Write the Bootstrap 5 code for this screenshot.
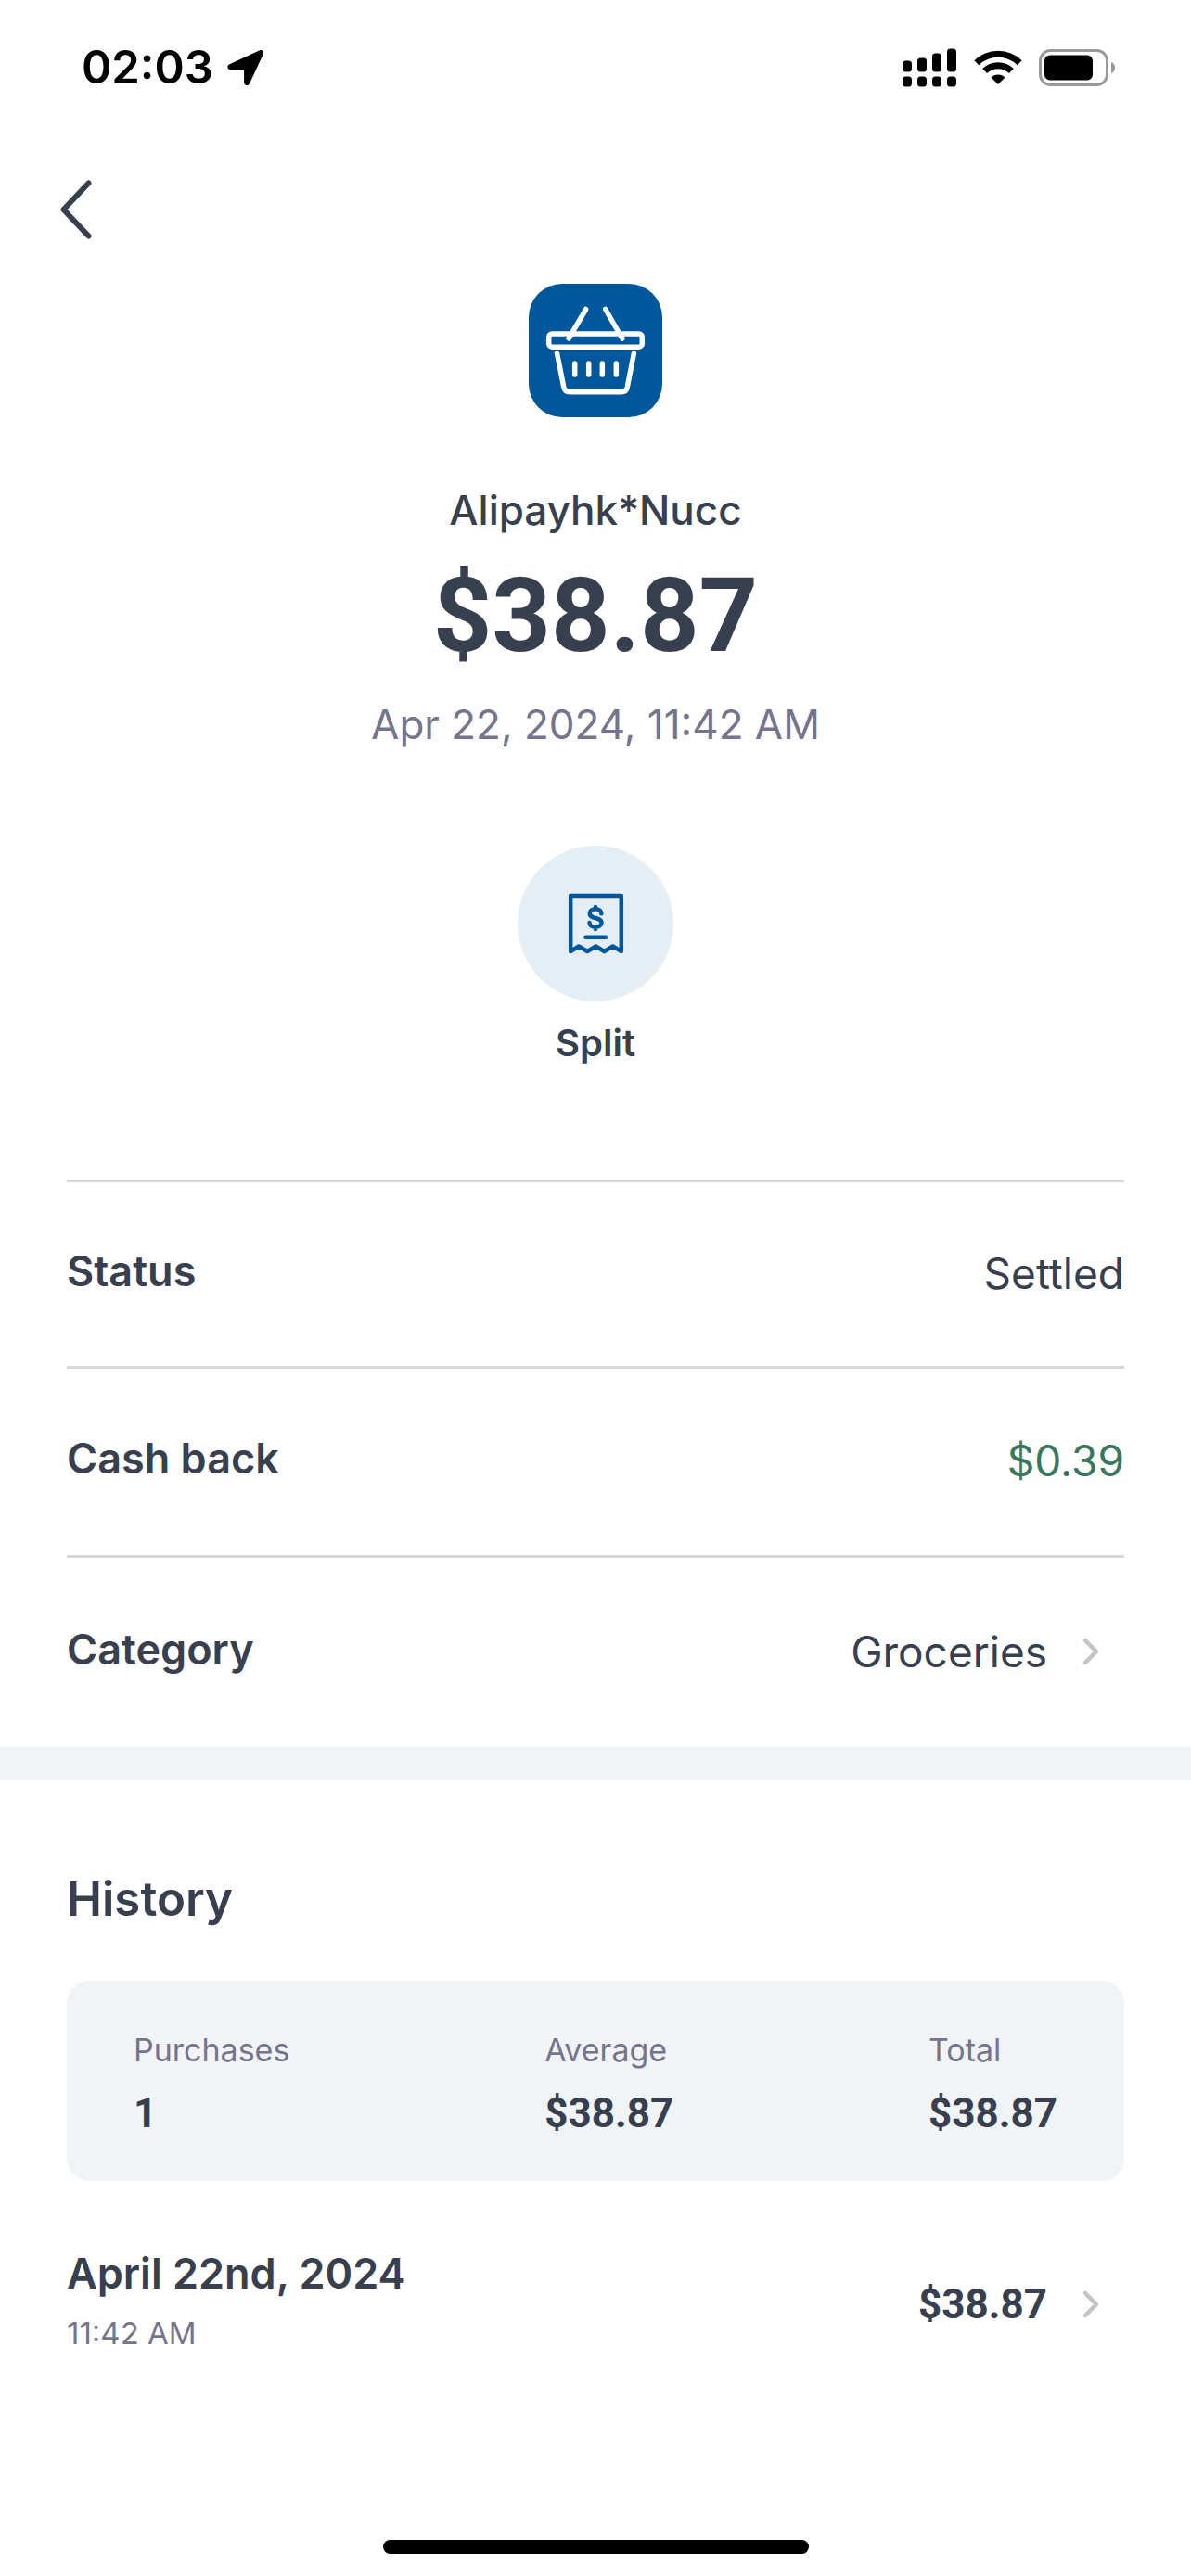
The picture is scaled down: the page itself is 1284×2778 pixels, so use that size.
<!DOCTYPE html>
<html lang="en">
<head>
<meta charset="utf-8">
<meta name="viewport" content="width=device-width, initial-scale=1">
<title>Transaction details</title>
<link href="https://cdn.jsdelivr.net/npm/bootstrap@5.3.0/dist/css/bootstrap.min.css" rel="stylesheet">
<style>
  :root {
    --ink: #383f4e;
    --muted-ink: #76748d;
    --brand: #01579b;
    --mist: #f0f4f7;
    --rule: #d8d8d8;
  }
  body {
    font-family: Inter, "Liberation Sans", sans-serif;
    color: var(--ink);
    background: #fff;
    font-size: 45px;
    line-height: 60px;
  }
  svg { display: block; flex: none; }
  .status-bar { padding: 43px 80px 0 88px; color: #000; }
  .clock { font-size: 49px; font-weight: 600; gap: 15px; }
  .signals { gap: 18px; }
  .back-btn { padding: 4px 6px; margin: 86px 0 0 55px; line-height: 0; color: var(--ink); }
  .summary { margin-top: 43px; }
  .tile { border-radius: 36px; background: var(--brand); }
  .merchant { font-size: 44px; font-weight: 500; line-height: 60px; margin: 70px 0 0; }
  .amount { font-family: Roboto, "Liberation Sans", sans-serif; font-weight: 700; }
  .amount-lg { font-size: 111px; line-height: 120px; margin-top: 24px; }
  .amount-sm { font-size: 44px; line-height: 60px; }
  .stamp { font-size: 44px; color: var(--muted-ink); margin-top: 27px; }
  .split-btn { margin-top: 101px; color: var(--ink); font-size: 40px; font-weight: 600; line-height: 50px; }
  .split-disc { width: 168px; height: 168px; background: #e5edf5; margin-bottom: 20px; }
  .facts { margin: 122px 72px 0; }
  .fact { border-top: 3px solid var(--rule); padding: 68px 0 70px; }
  .fact-cash { padding: 69px 0 72px; }
  .fact-link { padding: 71px 0 73px; }
  .fact dt { font-weight: 600; line-height: 56px; padding-bottom: 4px; }
  .fact dd { margin: 0; font-size: 46px; }
  .cash { color: #38775e; }
  .go { gap: 36px; padding-right: 26px; color: inherit; text-decoration: none; }
  .band { height: 36px; background: var(--mist); }
  .history { padding: 96px 72px 0; }
  .history-title { font-size: 51px; font-weight: 600; line-height: 64px; margin: 0 0 56px; }
  .totals { background: var(--mist); border-radius: 24px; padding: 51px 72px 43px; }
  .fine { font-size: 34px; line-height: 48px; color: var(--muted-ink); }
  .totals .amount-sm { margin-top: 14px; }
  .entry { margin-top: 70px; font-weight: 600; color: inherit; text-decoration: none; }
  .entry .fine { font-size: 33px; font-weight: 400; margin-top: 10px; }
  .entry .go { padding-top: 8px; }
  .home-bar { width: 459px; height: 15px; border-radius: 8px; background: #000; margin-bottom: 24px; }
</style>
<script src="https://cdn.jsdelivr.net/npm/bootstrap@5.3.0/dist/js/bootstrap.bundle.min.js"></script>
</head>
<body class="d-flex flex-column min-vh-100">

<header>
  <div class="status-bar d-flex justify-content-between align-items-center">
    <div class="clock d-flex align-items-center">
      <span>02:03</span>
      <svg width="40" height="40" viewBox="0 0 40 40" aria-hidden="true"><path d="M2.5 16.2 34.5 1.4c3-1.3 5.4 1 4.2 4L24 37.2c-1.400 2.900-5.900 2.300-5.900-1.200V22.200H3.600C-.1 22.200-.8 17.700 2.500 16.200z" fill="#000"/></svg>
    </div>
    <div class="signals d-flex align-items-center">
      <svg width="59" height="42" viewBox="0 0 59 42" aria-hidden="true">
        <rect x="0" y="13.500" width="10" height="12" rx="3.500"/><rect x="16" y="10.500" width="10" height="15" rx="3.500"/><rect x="32" y="5.500" width="10" height="20" rx="3.500"/><rect x="48" y="0.500" width="10" height="25" rx="3.500"/>
        <rect x="0" y="30.500" width="10" height="11" rx="3.500"/><rect x="16" y="30.500" width="10" height="11" rx="3.500"/><rect x="32" y="30.500" width="10" height="11" rx="3.500"/><rect x="48" y="30.500" width="10" height="11" rx="3.500"/>
      </svg>
      <svg width="52" height="38" viewBox="0 0 52 38" aria-hidden="true">
        <g fill="none" stroke="#000" stroke-width="7"><path d="M2.800 13.800a33 33 0 0 1 46.400 0"/><path d="M11.600 22.600a20.400 20.400 0 0 1 28.800 0"/></g>
        <path d="M18.500 29.500a10.600 10.600 0 0 1 15 0L26 37z"/>
      </svg>
      <svg width="84" height="40" viewBox="0 0 84 40" aria-hidden="true">
        <rect x="1.500" y="1.500" width="72" height="37" rx="11" fill="none" stroke="#999" stroke-width="3"/>
        <rect x="6" y="6.500" width="52" height="27" rx="6"/>
        <path d="M78 14c5.500 2 5.500 10 0 12z" fill="#999"/>
      </svg>
    </div>
  </div>
  <button type="button" class="btn border-0 back-btn" aria-label="Back">
    <svg width="40" height="66" viewBox="0 0 40 66" aria-hidden="true"><path d="M34.500 4.500 7.500 33l27 28.500" fill="none" stroke="currentColor" stroke-width="6" stroke-linecap="round" stroke-linejoin="round"/></svg>
  </button>
</header>

<main>
  <section class="summary d-flex flex-column align-items-center text-center">
    <svg class="tile" width="144" height="144" viewBox="0 0 144 144" role="img" aria-label="Groceries">
      <g fill="none" stroke="#fff" stroke-width="5.500" stroke-linecap="round" stroke-linejoin="round">
        <path d="M61.700 27.500 43.200 59M82.700 27.500 100.800 59"/>
        <rect x="21.700" y="53.900" width="100.600" height="14.300" rx="3.500"/>
        <path d="M30.500 75 37.800 111.500q1 5.200 6.500 5.200H99.800q5.500 0 6.500-5.200L113.400 75"/>
        <path d="M49.700 86V98M64.700 86V98M79.300 86V98M94.300 86V98"/>
      </g>
    </svg>
    <h1 class="merchant">Alipayhk*Nucc</h1>
    <div class="amount amount-lg">$38.87</div>
    <div class="stamp">Apr 22, 2024, 11:42 AM</div>
    <button type="button" class="btn border-0 p-0 split-btn d-flex flex-column align-items-center">
      <span class="split-disc rounded-circle">
        <svg width="168" height="168" viewBox="0 0 168 168" aria-hidden="true">
          <g fill="none" stroke="#01579b" stroke-width="4.500" stroke-linecap="round" stroke-linejoin="round">
            <path d="M57.200 54H111.800V114L102.700 108.500 93.500 114 84.300 108.500 75.200 114 66 108.500 57.200 114z"/>
            <path d="M73.500 98.800H95"/>
            <path d="M90.300 73.200C90.300 70 87.600 68.200 84 68.200S77.800 70.200 77.800 73.200C77.800 79.500 90.500 76.500 90.500 83 90.500 86 87.800 87.800 84 87.800S77.500 86 77.500 83M84 66V68M84 88V90"/>
          </g>
        </svg>
      </span>
      <span>Split</span>
    </button>
  </section>

  <dl class="facts">
    <div class="fact d-flex justify-content-between align-items-center"><dt>Status</dt><dd>Settled</dd></div>
    <div class="fact fact-cash d-flex justify-content-between align-items-center"><dt>Cash back</dt><dd class="cash">$0.39</dd></div>
    <div class="fact fact-link d-flex justify-content-between align-items-center"><dt>Category</dt>
      <dd><a href="#" class="go d-flex align-items-center">Groceries
        <svg width="21" height="32" viewBox="0 0 21 32" aria-hidden="true"><path d="M5 4 17 16 5 28" fill="none" stroke="#c4c4c8" stroke-width="4.500" stroke-linecap="round" stroke-linejoin="round"/></svg></a></dd>
    </div>
  </dl>
  <div class="band"></div>

  <section class="history">
    <h2 class="history-title">History</h2>
    <div class="totals d-flex justify-content-between">
      <div><div class="fine">Purchases</div><div class="amount amount-sm">1</div></div>
      <div><div class="fine">Average</div><div class="amount amount-sm">$38.87</div></div>
      <div><div class="fine">Total</div><div class="amount amount-sm">$38.87</div></div>
    </div>
    <a href="#" class="entry d-flex justify-content-between align-items-center">
      <div><div>April 22nd, 2024</div><div class="fine">11:42 AM</div></div>
      <div class="go d-flex align-items-center"><span class="amount amount-sm">$38.87</span>
        <svg width="21" height="32" viewBox="0 0 21 32" aria-hidden="true"><path d="M5 4 17 16 5 28" fill="none" stroke="#c4c4c8" stroke-width="4.500" stroke-linecap="round" stroke-linejoin="round"/></svg></div>
    </a>
  </section>
</main>

<div class="home-bar mt-auto mx-auto"></div>
</body>
</html>
